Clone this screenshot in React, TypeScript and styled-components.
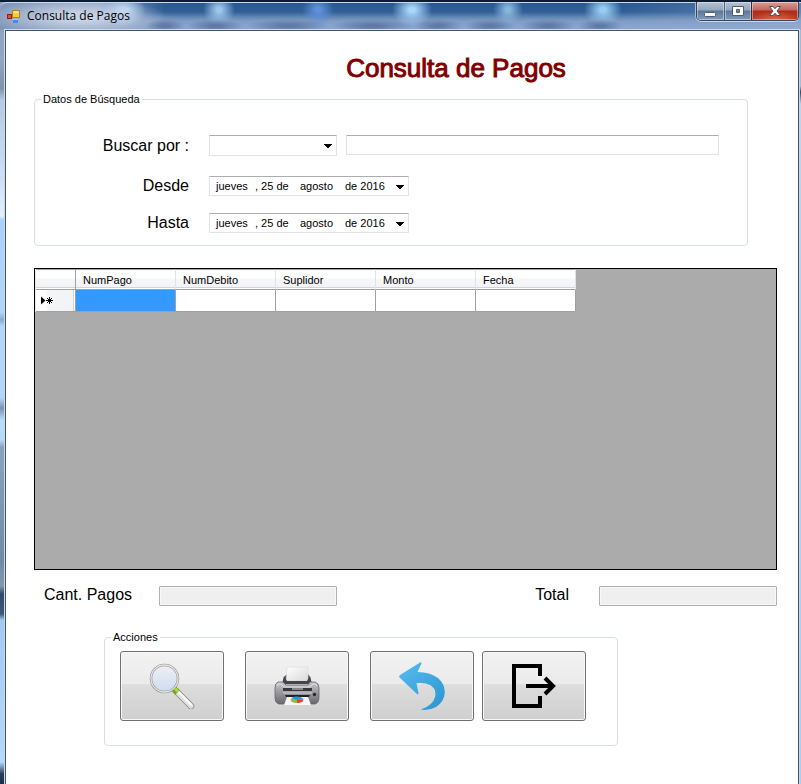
import React from "react";
import styled, { createGlobalStyle } from "styled-components";

const GlobalStyle = createGlobalStyle`
  *, *::before, *::after { box-sizing: border-box; }
  html, body { margin: 0; padding: 0; }
  body {
    font-family: "Liberation Sans", Arial, sans-serif;
    font-size: 11px;
    line-height: 13px;
    color: #000;
    background: #0e2340;
  }
  button, input, select { font: inherit; color: inherit; margin: 0; }
`;

const glow = (x: number, w: number, color: string) =>
  `radial-gradient(ellipse ${w}px 16px at ${x}px 7px, ${color} 15%, transparent 100%)`;
const smudge = (x: number, w: number) =>
  `radial-gradient(ellipse ${w}px 7px at ${x}px 23px, rgba(70, 96, 138, 0.6) 20%, transparent 100%)`;

const barLayers = [
  smudge(165, 20),
  smudge(215, 28),
  smudge(288, 41),
  smudge(372, 40),
  smudge(438, 24),
  smudge(490, 25),
  smudge(548, 27),
  smudge(600, 22),
  "radial-gradient(ellipse 90px 18px at 78px 14px, rgba(218, 227, 243, 0.75) 20%, transparent 100%)",
  glow(124, 22, "#b4cdee"),
  glow(219, 16, "#9cc5ea"),
  glow(318, 16, "#5f8fd8"),
  glow(412, 20, "#a8d6fc"),
  glow(508, 15, "#85b6dc"),
  glow(603, 19, "#98ccf2"),
  "linear-gradient(90deg, #8297b8 0, #93a5c2 100px, transparent 165px)",
  "linear-gradient(90deg, transparent 620px, rgba(150, 175, 208, 0.5) 100%)",
  "linear-gradient(180deg, #28588f 0, #306098 9px, #6285b3 14px, #7f9cc6 18px, #8ea9cf 28px)",
].join(", ");

const Window = styled.div`
  min-height: 100vh;
  display: flex;
  flex-direction: column;
  border-top: 2px solid #0b1c33;
  background:
    linear-gradient(180deg, #8fa3bf 0, #93a5bf 58px, #7f91a9 86px, #b6c9e2 98px,
      #cfe0f4 180px, #e6eef8 214px, #abd0f7 218px, #b3d5f9 310px, #89a9cb 318px,
      #b3d5f9 324px, #b3d5f9 396px, #7d93ad 406px, #b9dcfb 418px, #b6d8f8 438px,
      #8ba2bd 445px, #728aa6 560px, #8299ab 584px, #34496a 592px, #3e567a 612px,
      #a4c8f0 618px, #b5d7fb 760px, #2a3d5a 772px, #1d2d45 100%) left / 6px 100% no-repeat,
    linear-gradient(180deg, #9db4d3 0, #a9bdd7 84px, #2c4465 90px, #bcd4ee 102px,
      #a5cdf6 100%);
`;

const TitleBar = styled.header`
  height: 28px;
  display: flex;
  align-items: flex-start;
  padding: 0 2px 0 7px;
  border-top: 1px solid #c9d8ec;
  border-radius: 7px 0 0 0;
  background: ${barLayers};
`;

const AppIcon = styled.svg`
  width: 13px;
  height: 13px;
  margin: 7px 7px 0 0;
  flex: none;
`;

const Caption = styled.div`
  flex: 1;
  font: 12px/16px "Open Sans", "Segoe UI", sans-serif;
  padding-top: 5px;
`;

const CaptionButtons = styled.div`
  display: flex;
  height: 19px;
  margin-top: -1px;
  border: 1px solid #35465f;
  border-top: 0;
  border-radius: 0 0 5px 5px;
  overflow: hidden;
  box-shadow: 0 1px 0 #c8d9ee, -1px 0 0 #a9bdd8;
`;

const CaptionButton = styled.button<{ $close?: boolean }>`
  width: ${(p) => (p.$close ? 47 : 27)}px;
  padding: 0;
  display: flex;
  align-items: center;
  justify-content: center;
  border: 0;
  border-left: 1px solid ${(p) => (p.$close ? "#4a2430" : "#4c6180")};
  box-shadow: inset 0 0 0 1px rgba(255, 255, 255, 0.4);
  background: ${(p) =>
    p.$close
      ? "radial-gradient(ellipse 24px 9px at 50% 100%, #e2663f, transparent), linear-gradient(180deg, #dc9c94 0, #c4665c 8px, #a92c1c 9px, #bd3b25 100%)"
      : "linear-gradient(180deg, #b5c2d3 0, #93a7c0 8px, #5c7797 9px, #7f9bbd 100%)"};

  &:first-child { border-left: 0; }
`;

const Client = styled.main`
  flex: 1;
  margin: 0 2px 0 5px;
  padding: 23px 21px 24px 28px;
  background: #fff;
  border: 1px solid #44546a;
  border-bottom: 0;
  box-shadow: 0 0 0 1px #c7d9ee;
`;

const Heading = styled.h1`
  margin: 0 0 11px;
  padding-left: 101px;
  font-size: 26px;
  font-weight: 400;
  line-height: 28px;
  text-align: center;
  color: #800000;
  -webkit-text-stroke: 1px #800000;
`;

const Group = styled.fieldset`
  min-width: 0;
  margin: 0;
  border: 1px solid #d5dfe5;
  border-radius: 4px;
`;

const Legend = styled.legend<{ $outdent?: boolean }>`
  margin-left: ${(p) => (p.$outdent ? -9 : 6)}px;
  padding: 0 2px;
`;

const SearchGroup = styled(Group)`
  margin-right: 29px;
  padding: 29px 28px 12px 0;
`;

const FieldRow = styled.div`
  display: flex;
  gap: 20px;
  min-height: 21px;
  align-items: center;

  & + & { margin-top: 19px; }
  & + & + & { margin-top: 16px; }
`;

const Label = styled.label<{ $wide?: boolean }>`
  ${(p) => (p.$wide ? "width: 154px; text-align: right;" : "")}
  flex: none;
  font-size: 16px;
  line-height: 20px;
`;

const Criteria = styled.div`
  flex: 1;
  display: flex;
  align-items: flex-start;
  gap: 9px;
`;

const fieldBorder = `
  border: 1px solid #e2e3ea;
  border-top-color: #abadb3;
  border-radius: 1px;
`;

const arrow = (top: number) =>
  [0, 1, 2, 3]
    .map(
      (i) =>
        `linear-gradient(#000, #000) right ${4 + i}px top ${top + i}px / ${8 - 2 * i}px 1px no-repeat`
    )
    .join(", ");

const Combo = styled.select`
  appearance: none;
  width: 128px;
  height: 21px;
  padding: 0 18px 0 4px;
  background: ${arrow(8)}, #fff;
  ${fieldBorder}
`;

const TextBox = styled.input`
  flex: 1;
  min-width: 0;
  height: 20px;
  padding: 0 4px;
  background: #fff;
  ${fieldBorder}
`;

const DateButton = styled.button`
  width: 200px;
  height: 20px;
  padding: 1px 0 0 6px;
  display: grid;
  grid-template-columns: 39px 45px 45px 1fr;
  align-items: center;
  text-align: left;
  white-space: nowrap;
  background: ${arrow(8)}, #fff;
  ${fieldBorder}
`;

const GridPanel = styled.div`
  height: 302px;
  margin-top: 22px;
  border: 1px solid #000;
  background: #ababab;
  overflow: auto;
`;

const Table = styled.table`
  table-layout: fixed;
  width: 541px;
  border-collapse: separate;
  border-spacing: 0;
  border-left: 1px solid #e8e8e8;
`;

const ColHead = styled.th<{ $row?: boolean }>`
  width: ${(p) => (p.$row ? 40 : 100)}px;
  height: 21px;
  padding: 1px 0 0 7px;
  font-weight: 400;
  text-align: left;
  background: linear-gradient(180deg, #fff 0, #fff 8px, #f5f6f8 9px, #f2f3f6 100%);
  border-top: 1px solid #a0a0a0;
  border-bottom: 1px solid #a0a0a0;
  border-right: 1px solid ${(p) => (p.$row ? "#a0a0a0" : "#e0e2e5")};
  box-shadow: inset 0 -1px 0 #fff, inset 0 -2px 0 #d5d5d5;
`;

const RowHead = styled.th`
  height: 22px;
  padding: 0 0 0 5px;
  text-align: left;
  background: linear-gradient(90deg, #fff 0, #fff 10px, #f4f5f7 12px, #f2f3f6 100%);
  border-right: 1px solid #a0a0a0;
  border-bottom: 1px solid #a0a0a0;
  box-shadow: inset -1px 0 0 #fff, inset -2px 0 0 #d8d8d8;

  svg { display: block; }
`;

const Cell = styled.td<{ $selected?: boolean }>`
  padding: 0;
  background: ${(p) => (p.$selected ? "#3399ff" : "#fff")};
  border-right: 1px solid #a0a0a0;
  border-bottom: 1px solid #a0a0a0;
`;

const Totals = styled.div`
  display: flex;
  justify-content: space-between;
  margin-top: 15px;
  padding-left: 10px;
`;

const Total = styled.div<{ $gap: number }>`
  display: flex;
  align-items: flex-start;
  gap: ${(p) => p.$gap}px;
`;

const ReadOnlyBox = styled.input`
  width: 178px;
  height: 20px;
  margin-top: 1px;
  padding: 0 4px;
  background: #efefef;
  border: 1px solid #afafaf;
  border-radius: 1px;
  box-shadow: inset 0 0 0 1px #f8f8f8;
`;

const ActionGroup = styled(Group)`
  max-width: 514px;
  margin: 25px 0 0 70px;
  padding: 7px 15px 24px;
`;

const Actions = styled.div`
  display: flex;
  gap: 21px;
`;

const ActionPair = styled.div`
  display: flex;
  gap: 8px;
`;

const ActionButton = styled.button`
  width: 104px;
  height: 70px;
  padding: 0;
  display: flex;
  align-items: center;
  justify-content: center;
  border: 1px solid #707070;
  border-radius: 3px;
  background: linear-gradient(180deg, #f2f2f2 0, #ebebeb 47%, #dddddd 48%, #cfcfcf 100%);
  box-shadow: inset 0 0 0 1px #f8f8f8;
`;

function FormIcon() {
  return (
    <AppIcon viewBox="0 0 13 13" aria-hidden="true">
      <rect x="5.5" y="0.5" width="7" height="7" fill="#f8cb3c" stroke="#b18420" />
      <path d="M6.5 3V1.500H11.500V3Z" fill="#ffe99c" />
      <rect x="0.500" y="4.500" width="4" height="4" fill="#e24a2c" stroke="#9b1c12" />
      <rect x="6" y="9" width="5" height="4" fill="#4b87ec" />
      <path d="M6 9.500H11" stroke="#a9ccff" />
    </AppIcon>
  );
}

function SearchIcon() {
  return (
    <svg width="46" height="46" viewBox="0 0 46 46" aria-hidden="true">
      <defs>
        <linearGradient id="lens" x1="0" y1="0" x2="0" y2="1">
          <stop offset="0" stopColor="#eef0f6" />
          <stop offset="0.5" stopColor="#dfe5f2" />
          <stop offset="1" stopColor="#cbdcf2" />
        </linearGradient>
      </defs>
      <path d="M28 29L42 43" stroke="#858585" strokeWidth="6.500" strokeLinecap="round" />
      <path d="M28 29L42 43" stroke="#e2e2e2" strokeWidth="5" strokeLinecap="round" />
      <path d="M29 28.500L42 41.500" stroke="#fff" strokeWidth="2" strokeLinecap="round" />
      <path d="M24.500 25.500L28.500 29.500" stroke="#76a51e" strokeWidth="6.500" />
      <path d="M25 24.500L29 28.500" stroke="#a9e02f" strokeWidth="3" />
      <circle cx="15.500" cy="15.500" r="13.500" fill="url(#lens)" stroke="#929292" strokeWidth="2.500" />
      <circle cx="15.500" cy="15.500" r="13.500" fill="none" stroke="#e3e3e3" strokeWidth="1.300" />
    </svg>
  );
}

function PrinterIcon() {
  return (
    <svg width="46" height="40" viewBox="0 0 46 40" aria-hidden="true">
      <defs>
        <linearGradient id="printer" x1="0" y1="0" x2="0" y2="1">
          <stop offset="0" stopColor="#c9c9cd" />
          <stop offset="0.450" stopColor="#9a9a9f" />
          <stop offset="1" stopColor="#68686d" />
        </linearGradient>
        <linearGradient id="sheet" x1="0" y1="0" x2="1" y2="1">
          <stop offset="0" stopColor="#fff" />
          <stop offset="1" stopColor="#d8d8d8" />
        </linearGradient>
      </defs>
      <path d="M13 8L10 11L9 18H37L36 11L34 8Z" fill="#55555a" />
      <path d="M13 1H34V15H12Z" fill="url(#sheet)" stroke="#d0d0d0" strokeWidth="0.500" />
      <path d="M10 10L13 15H33L36 10L38 18H8Z" fill="#44444a" />
      <path d="M4 16Q1 17 1 22V32Q1 37 5 38H11L13 33H34L36 38H41Q45 37 45 31V22Q45 17 41 16H36L34 19H12L9 16Z" fill="url(#printer)" stroke="#65656a" strokeWidth="0.800" />
      <path d="M3 20Q4 17 7 18L10 21H36L39 18Q42 17 43 20" fill="none" stroke="#dedee2" />
      <path d="M9 22H38V25H9Z" fill="#37373c" />
      <path d="M18 22H29V24H18Z" fill="#85858b" />
      <path d="M9 25.500H38V28H9Z" fill="#b4b4b9" />
      <path d="M11 29H36L35 31H12Z" fill="#222226" />
      <path d="M13 31H34L37 39H10Z" fill="#f7f7fa" />
      <path d="M23 34V31Q17 31 16.500 34Q17 37 23 37Z" fill="#7fc540" />
      <path d="M23 34L17.500 32Q22 29.500 27.500 31.500Q29 32.500 29.500 33.500Z" fill="#1c9edc" />
      <path d="M23 34L29.500 33.500Q29 37 23 37Z" fill="#ee3e23" />
      <circle cx="40.500" cy="28.500" r="1.700" fill="#2a2a2e" />
    </svg>
  );
}

function UndoIcon() {
  return (
    <svg width="46" height="48" viewBox="0 0 46 48" aria-hidden="true">
      <defs>
        <linearGradient id="undo" x1="0" y1="0" x2="0.800" y2="1">
          <stop offset="0" stopColor="#56bdf0" />
          <stop offset="1" stopColor="#2f97d2" />
        </linearGradient>
      </defs>
      <path d="M21.500 0.200Q23 0 22.200 2L18.500 10Q31 10 39 16Q46 22 45.800 31Q45 40 37 45Q31 48.500 23 47.800Q21.500 47.500 23 47Q34 43 36 35Q38 27 31 23Q26 20.500 17.500 21.200L19.500 31Q19.500 33 18 32L0.500 15.500Q-0.200 14 1 13Z" fill="url(#undo)" />
    </svg>
  );
}

function ExitIcon() {
  return (
    <svg width="44" height="44" viewBox="0 0 44 44" fill="none" stroke="#000" strokeWidth="4" aria-hidden="true">
      <path d="M28 12V2H2V42H28V32" />
      <path d="M14 22H42" />
      <path d="M33 14L41 22L33 30" />
    </svg>
  );
}

const columns = ["NumPago", "NumDebito", "Suplidor", "Monto", "Fecha"];

function DateField({ id, label }: { id: string; label: string }) {
  return (
    <FieldRow>
      <Label $wide htmlFor={id}>{label}</Label>
      <DateButton id={id} type="button" aria-haspopup="dialog">
        <span>jueves</span>
        <span>, 25 de</span>
        <span>agosto</span>
        <span>de 2016</span>
      </DateButton>
    </FieldRow>
  );
}

export default function App() {
  return (
    <>
      <GlobalStyle />
      <Window>
        <TitleBar>
          <FormIcon />
          <Caption>Consulta de Pagos</Caption>
          <CaptionButtons>
            <CaptionButton type="button" aria-label="Minimizar">
              <svg width="13" height="13" viewBox="0 0 13 13">
                <rect x="0.500" y="7.500" width="11" height="4" rx="1" fill="#fff" stroke="#535c6b" />
              </svg>
            </CaptionButton>
            <CaptionButton type="button" aria-label="Maximizar">
              <svg width="13" height="12" viewBox="0 0 13 12">
                <path d="M0.500 1.500H11.500V10.500H0.500ZM4.500 4.500V7.500H7.500V4.500Z" fill="#fff" fillRule="evenodd" stroke="#535c6b" />
              </svg>
            </CaptionButton>
            <CaptionButton type="button" $close aria-label="Cerrar">
              <svg width="13" height="12" viewBox="0 0 13 12">
                <path d="M0.500 1.500H4L6 3.700L8 1.500H11.500L8 6L11.500 10.500H8L6 8.300L4 10.500H0.500L4 6Z" fill="#fff" stroke="#5b4a55" />
              </svg>
            </CaptionButton>
          </CaptionButtons>
        </TitleBar>
        <Client>
          <Heading>Consulta de Pagos</Heading>
          <SearchGroup>
            <Legend>Datos de Búsqueda</Legend>
            <FieldRow>
              <Label $wide htmlFor="criterion">Buscar por :</Label>
              <Criteria>
                <Combo id="criterion" defaultValue="">
                  <option value=""></option>
                </Combo>
                <TextBox type="text" aria-label="Texto de búsqueda" />
              </Criteria>
            </FieldRow>
            <DateField id="from" label="Desde" />
            <DateField id="to" label="Hasta" />
          </SearchGroup>
          <GridPanel>
            <Table>
              <thead>
                <tr>
                  <ColHead $row aria-label="Fila" />
                  {columns.map((c) => (
                    <ColHead key={c} scope="col">{c}</ColHead>
                  ))}
                </tr>
              </thead>
              <tbody>
                <tr>
                  <RowHead scope="row" aria-label="Fila nueva">
                    <svg width="14" height="9" viewBox="0 0 14 9">
                      <path d="M0 0.500L4.500 4.500L0 8.500Z" />
                      <path d="M8.500 1V8M5 4.500H12M6 2L11 7M11 2L6 7" stroke="#000" />
                    </svg>
                  </RowHead>
                  {columns.map((c, i) => (
                    <Cell key={c} $selected={i === 0} />
                  ))}
                </tr>
              </tbody>
            </Table>
          </GridPanel>
          <Totals>
            <Total $gap={27}>
              <Label htmlFor="count">Cant. Pagos</Label>
              <ReadOnlyBox id="count" type="text" readOnly />
            </Total>
            <Total $gap={30}>
              <Label htmlFor="total">Total</Label>
              <ReadOnlyBox id="total" type="text" readOnly />
            </Total>
          </Totals>
          <ActionGroup>
            <Legend $outdent>Acciones</Legend>
            <Actions>
              <ActionButton type="button" aria-label="Buscar"><SearchIcon /></ActionButton>
              <ActionButton type="button" aria-label="Imprimir"><PrinterIcon /></ActionButton>
              <ActionPair>
                <ActionButton type="button" aria-label="Deshacer"><UndoIcon /></ActionButton>
                <ActionButton type="button" aria-label="Salir"><ExitIcon /></ActionButton>
              </ActionPair>
            </Actions>
          </ActionGroup>
        </Client>
      </Window>
    </>
  );
}
